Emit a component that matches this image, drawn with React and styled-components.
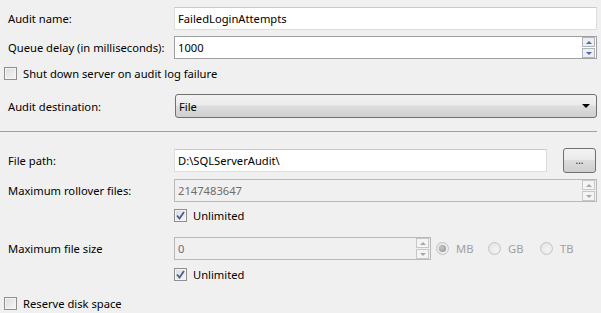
import React from "react";
import styled, { createGlobalStyle, css } from "styled-components";

const GlobalStyle = createGlobalStyle`
  body {
    margin: 0;
    background: #f0f0f0;
    font-family: "Noto Sans", "Open Sans", sans-serif;
    font-size: 11.2px;
    color: #000;
  }
`;

const Page = styled.div`
  display: flex;
  flex-direction: column;
  padding: 7px 4px 0 4px;
  width: 601px;
  height: 313px;
  box-sizing: border-box;
  overflow: hidden;
`;

const Row = styled.div`
  display: grid;
  grid-template-columns: 170px 1fr;
  align-items: center;
  margin-top: ${(p) => p.$top || 0}px;
  height: ${(p) => p.$h || 23}px;
`;

const Label = styled.div`
  padding-left: 4px;
  white-space: nowrap;
  color: #000;
`;

const fieldBase = css`
  height: 23px;
  box-sizing: border-box;
  display: flex;
  align-items: center;
  padding-left: 3px;
  white-space: nowrap;
`;

const TextBox = styled.div`
  ${fieldBase}
  background: #fff;
  border: 1px solid #dcdde2;
  border-top-color: #c9cacf;
  width: ${(p) => p.$w || "100%"};
`;

const NumBox = styled.div`
  ${fieldBase}
  justify-content: space-between;
  padding-right: 1px;
  width: ${(p) => p.$w || "100%"};
  background: ${(p) => (p.$disabled ? "#f0f0f0" : "#fff")};
  border: 1px solid ${(p) => (p.$disabled ? "#b8b8b8" : "#a0a0a0")};
  color: ${(p) => (p.$disabled ? "#6d6d6d" : "#000")};
`;

const Spinner = styled.div`
  display: flex;
  flex-direction: column;
  gap: 1px;
  width: 13px;
`;

const SpinBtn = styled.div`
  height: 8px;
  display: flex;
  align-items: center;
  justify-content: center;
  background: ${(p) => (p.$disabled ? "#f4f4f4" : "#eceef2")};
  border: 1px solid ${(p) => (p.$disabled ? "#c8c8c8" : "#b0b4bc")};
`;

const Arrow = styled.div`
  width: 0;
  height: 0;
  border-left: 3px solid transparent;
  border-right: 3px solid transparent;
  ${(p) =>
    p.$up
      ? `border-bottom: 3px solid ${p.$disabled ? "#a8a8a8" : "#4e6aa8"};`
      : `border-top: 3px solid ${p.$disabled ? "#a8a8a8" : "#4e6aa8"};`}
`;

const Combo = styled.div`
  ${fieldBase}
  height: 24px;
  margin-left: 1px;
  padding: 0 6px 0 3px;
  justify-content: space-between;
  border: 1px solid #707070;
  border-radius: 3px;
  background: linear-gradient(#f2f2f2 0%, #ebebeb 45%, #dddddd 50%, #cfcfcf 100%);
`;

const ComboArrow = styled.div`
  width: 0;
  height: 0;
  border-left: 4px solid transparent;
  border-right: 4px solid transparent;
  border-top: 4px solid #000;
`;

const Separator = styled.div`
  margin-top: 13px;
  height: 1px;
  background: #a0a0a0;
  margin-left: -4px;
`;

const PathLine = styled.div`
  display: flex;
  align-items: center;
  justify-content: space-between;
`;

const Button = styled.div`
  width: 33px;
  height: 25px;
  margin-right: 1px;
  box-sizing: border-box;
  border: 1px solid #707070;
  border-radius: 3px;
  background: linear-gradient(#f2f2f2 0%, #ebebeb 45%, #dddddd 50%, #cfcfcf 100%);
  display: flex;
  align-items: center;
  justify-content: center;
  font-size: 10px;
  color: #500050;
  line-height: 1;
  padding-bottom: 2px;
`;

const CheckLine = styled.label`
  display: flex;
  align-items: center;
  gap: 6px;
  height: 13px;
  margin-top: ${(p) => p.$top || 0}px;
  white-space: nowrap;
`;

const Box = styled.span`
  width: 13px;
  height: 13px;
  box-sizing: border-box;
  border: 1px solid #8f8f8f;
  background: linear-gradient(135deg, #dcdcdc, #f6f6f6);
  box-shadow: inset 0 0 0 1px #f4f4f4;
  display: flex;
  align-items: center;
  justify-content: center;
  flex-shrink: 0;
`;

const SizeLine = styled.div`
  display: flex;
  align-items: center;
`;

const RadioGroup = styled.div`
  display: flex;
  align-items: center;
  margin-left: 5px;
`;

const RadioItem = styled.div`
  display: flex;
  align-items: center;
  gap: 7px;
  width: 52px;
  color: #a0a0a0;
`;

const RadioDot = styled.span`
  width: 13px;
  height: 13px;
  box-sizing: border-box;
  border-radius: 50%;
  border: 1px solid #c4c4c4;
  background: radial-gradient(circle at 60% 60%, #f4f4f4, #e0e0e0);
  display: flex;
  align-items: center;
  justify-content: center;
  &::after {
    content: "";
    display: ${(p) => (p.$on ? "block" : "none")};
    width: 7px;
    height: 7px;
    border-radius: 50%;
    background: radial-gradient(circle at 40% 40%, #c8c8c8, #8a8a8a);
  }
`;

const Check = () => (
  <svg width="9" height="9" viewBox="0 0 9 9">
    <path d="M1 4.5 L3.5 7.5 L8 1" fill="none" stroke="#4a5d94" strokeWidth="1.8" />
  </svg>
);

const Checkbox = ({ checked, children, top }) => (
  <CheckLine $top={top}>
    <Box>{checked && <Check />}</Box>
    <span>{children}</span>
  </CheckLine>
);

const Spin = ({ disabled }) => (
  <Spinner>
    <SpinBtn $disabled={disabled}>
      <Arrow $up $disabled={disabled} />
    </SpinBtn>
    <SpinBtn $disabled={disabled}>
      <Arrow $disabled={disabled} />
    </SpinBtn>
  </Spinner>
);

export default function App() {
  return (
    <>
      <GlobalStyle />
      <Page>
        <Row>
          <Label>Audit name:</Label>
          <TextBox>FailedLoginAttempts</TextBox>
        </Row>
        <Row $top={6}>
          <Label>Queue delay (in milliseconds):</Label>
          <NumBox>
            <span>1000</span>
            <Spin />
          </NumBox>
        </Row>
        <Checkbox top={8}>Shut down server on audit log failure</Checkbox>
        <Row $top={14} $h={24}>
          <Label>Audit destination:</Label>
          <Combo>
            <span>File</span>
            <ComboArrow />
          </Combo>
        </Row>
        <Separator />
        <Row $top={16} $h={25}>
          <Label>File path:</Label>
          <PathLine>
            <TextBox $w="373px">D:\SQLServerAudit\</TextBox>
            <Button>...</Button>
          </PathLine>
        </Row>
        <Row $top={6}>
          <Label>Maximum rollover files:</Label>
          <NumBox $disabled>
            <span>2147483647</span>
            <Spin disabled />
          </NumBox>
        </Row>
        <Row $top={7} $h={13}>
          <span />
          <Checkbox checked>Unlimited</Checkbox>
        </Row>
        <Row $top={15}>
          <Label>Maximum file size</Label>
          <SizeLine>
            <NumBox $disabled $w="257px">
              <span>0</span>
              <Spin disabled />
            </NumBox>
            <RadioGroup>
              <RadioItem>
                <RadioDot $on />
                <span>MB</span>
              </RadioItem>
              <RadioItem>
                <RadioDot />
                <span>GB</span>
              </RadioItem>
              <RadioItem>
                <RadioDot />
                <span>TB</span>
              </RadioItem>
            </RadioGroup>
          </SizeLine>
        </Row>
        <Row $top={8} $h={13}>
          <span />
          <Checkbox checked>Unlimited</Checkbox>
        </Row>
        <Checkbox top={16}>Reserve disk space</Checkbox>
      </Page>
    </>
  );
}
